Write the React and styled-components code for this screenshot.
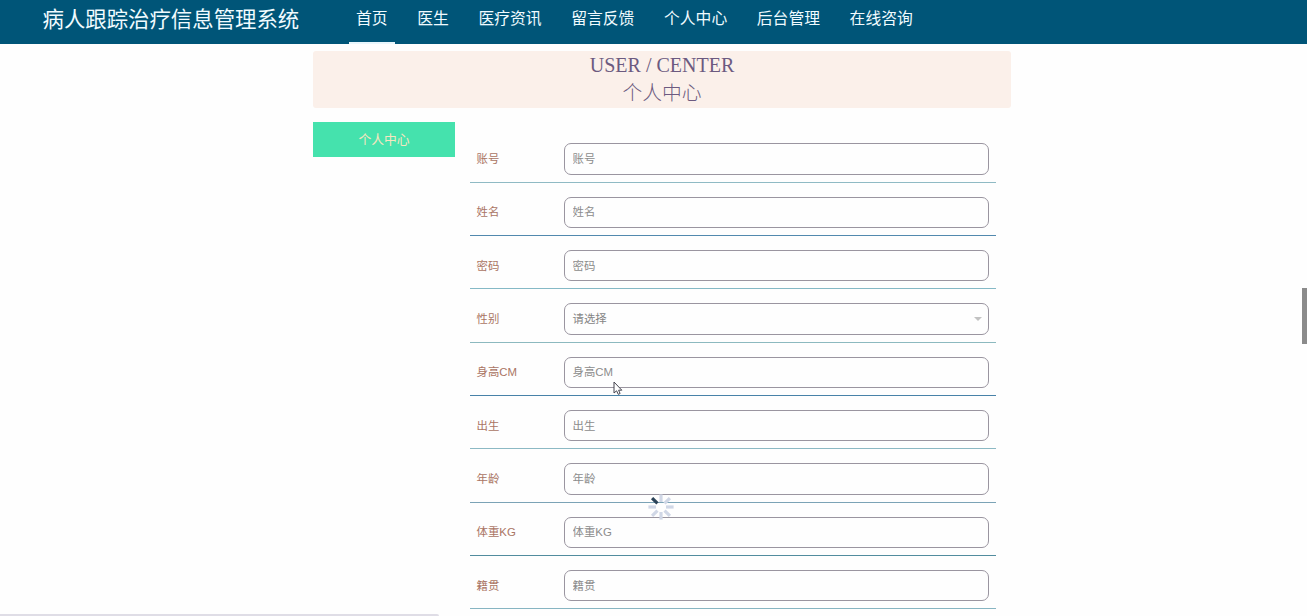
import styled, { createGlobalStyle } from "styled-components";

const navItems = ["首页", "医生", "医疗资讯", "留言反馈", "个人中心", "后台管理", "在线咨询"];

const fields = [
    { label: "账号", line: "#8fbac4" },
    { label: "姓名", line: "#5289ae" },
    { label: "密码", line: "#85b9c6" },
    { label: "性别", line: "#8cb9bf", select: true },
    { label: "身高CM", line: "#4882a8" },
    { label: "出生", line: "#8cb9c4" },
    { label: "年龄", line: "#7ba3b6" },
    { label: "体重KG", line: "#528c9e" },
    { label: "籍贯", line: "#87b5c2" },
];

const spokes = [0, 45, 90, 135, 180, 225, 270, 315];

const App = () => {
    return (
        <>
            <GlobalStyle />
            <Header>
                <Brand>病人跟踪治疗信息管理系统</Brand>
                <Nav>
                    {
                        navItems.map((item, i) => (
                            <NavItem key={item} $active={i === 0}>{item}</NavItem>
                        ))
                    }
                </Nav>
            </Header>
            <Container>
                <Banner>
                    <p>USER / CENTER</p>
                    <h2>个人中心</h2>
                </Banner>
                <Content>
                    <SideItem>个人中心</SideItem>
                    <Form>
                        {
                            fields.map(({ label, line, select }) => (
                                <Row key={label} $line={line}>
                                    <Label>{label}</Label>
                                    {select ? (
                                        <Select>
                                            <span>请选择</span>
                                            <Arrow />
                                        </Select>
                                    ) : (
                                        <Input placeholder={label} />
                                    )}
                                </Row>
                            ))
                        }
                    </Form>
                </Content>
            </Container>
            <Spinner viewBox="-13 -13 26 26">
                {
                    spokes.map((deg) => (
                        <line
                            key={deg}
                            x1="0" y1="-5" x2="0" y2="-12.6"
                            transform={`rotate(${deg})`}
                            stroke={deg === 315 ? "#2b4358" : "#d0d7e6"}
                        />
                    ))
                }
            </Spinner>
            <Cursor viewBox="0 0 10 15">
                <path d="M1 1 V12 L3.6 9.8 L5.3 13.4 L7.1 12.5 L5.6 9.2 H8.8 Z" />
            </Cursor>
            <ScrollThumb />
            <StatusBar />
        </>
    )
}

const GlobalStyle = createGlobalStyle`
    * {
        box-sizing: border-box;
    }
    html, body {
        margin: 0;
        height: 616px;
        overflow: hidden;
        background-color: #fefefe;
        font-family: "Liberation Sans", "Noto Sans CJK SC", sans-serif;
    }
    p, h1, h2 {
        margin: 0;
        font-weight: 400;
    }
`

const Header = styled.header`
    display: flex;
    height: 44px;
    padding-left: 42.5px;
    background-color: #005578;
    color: #f0fbff;
`

const Brand = styled.h1`
    width: 306.5px;
    font-size: 21.4px;
    line-height: 40px;
    white-space: nowrap;
`

const Nav = styled.nav`
    display: flex;
    gap: 15.6px;
`

const NavItem = styled.a`
    height: 44px;
    padding: 0 7px;
    font-size: 15.8px;
    line-height: 38px;
    white-space: nowrap;
    border-bottom: 2px solid ${({ $active }) => ($active ? "#e8f6fc" : "transparent")};
`

const Container = styled.main`
    width: 698px;
    margin: 7px 0 0 313px;
`

const Banner = styled.div`
    height: 57px;
    border-radius: 3px;
    background-color: #fbf0ea;
    color: #6c5a80;
    text-align: center;

    p {
        font-family: "Liberation Serif", serif;
        font-size: 20px;
        line-height: 28px;
    }
    h2 {
        font-family: "Liberation Serif", "Noto Sans CJK SC", serif;
        font-size: 19.8px;
        font-weight: 300;
        line-height: 29px;
    }
`

const Content = styled.div`
    display: flex;
    gap: 15px;
    margin-top: 14px;
`

const SideItem = styled.div`
    width: 142px;
    height: 35px;
    background-color: #45e2ad;
    color: #f5e6c0;
    font-size: 12.8px;
    line-height: 35px;
    text-align: center;
`

const Form = styled.form`
    width: 526px;
    padding-top: 7.4px;
`

const Row = styled.div`
    display: flex;
    align-items: center;
    height: 53.33px;
    padding: 14px 7px 7px 6.5px;
    border-bottom: 1px solid ${({ $line }) => $line};
`

const Label = styled.label`
    width: 87px;
    padding-bottom: 2px;
    color: #aa7564;
    font-size: 11.4px;
`

const Input = styled.input`
    width: 425.5px;
    height: 31.5px;
    padding: 0 8px;
    border: 1px solid #9a95a0;
    border-radius: 7px;
    background-color: #fefefe;
    font-family: inherit;
    font-size: 11.4px;
    outline: none;

    &::placeholder {
        color: #8c8c8c;
        opacity: 1;
    }
`

const Select = styled.div`
    display: flex;
    align-items: center;
    justify-content: space-between;
    width: 425.5px;
    height: 31.5px;
    padding: 0 6px 0 8px;
    border: 1px solid #9a95a0;
    border-radius: 7px;
    color: #848484;
    font-size: 11.4px;

    span {
        padding-bottom: 2px;
    }
`

const Arrow = styled.i`
    border: 4px solid transparent;
    border-top-color: #c2c2c2;
    border-bottom: 0;
`

const Spinner = styled.svg`
    position: fixed;
    left: 648px;
    top: 493.5px;
    width: 26px;
    height: 26px;
    stroke-width: 3.2;
`

const Cursor = styled.svg`
    position: fixed;
    left: 613px;
    top: 381px;
    width: 10px;
    height: 15px;
    fill: #fff;
    stroke: #45454f;
    stroke-width: 1;
`

const ScrollThumb = styled.div`
    position: fixed;
    top: 288px;
    right: 0;
    width: 5px;
    height: 56px;
    background-color: #8b8b8b;
`

const StatusBar = styled.div`
    position: fixed;
    left: 0;
    bottom: 0;
    width: 439px;
    height: 2px;
    border-top-right-radius: 2px;
    background-color: #dfdde6;
`

export default App;
